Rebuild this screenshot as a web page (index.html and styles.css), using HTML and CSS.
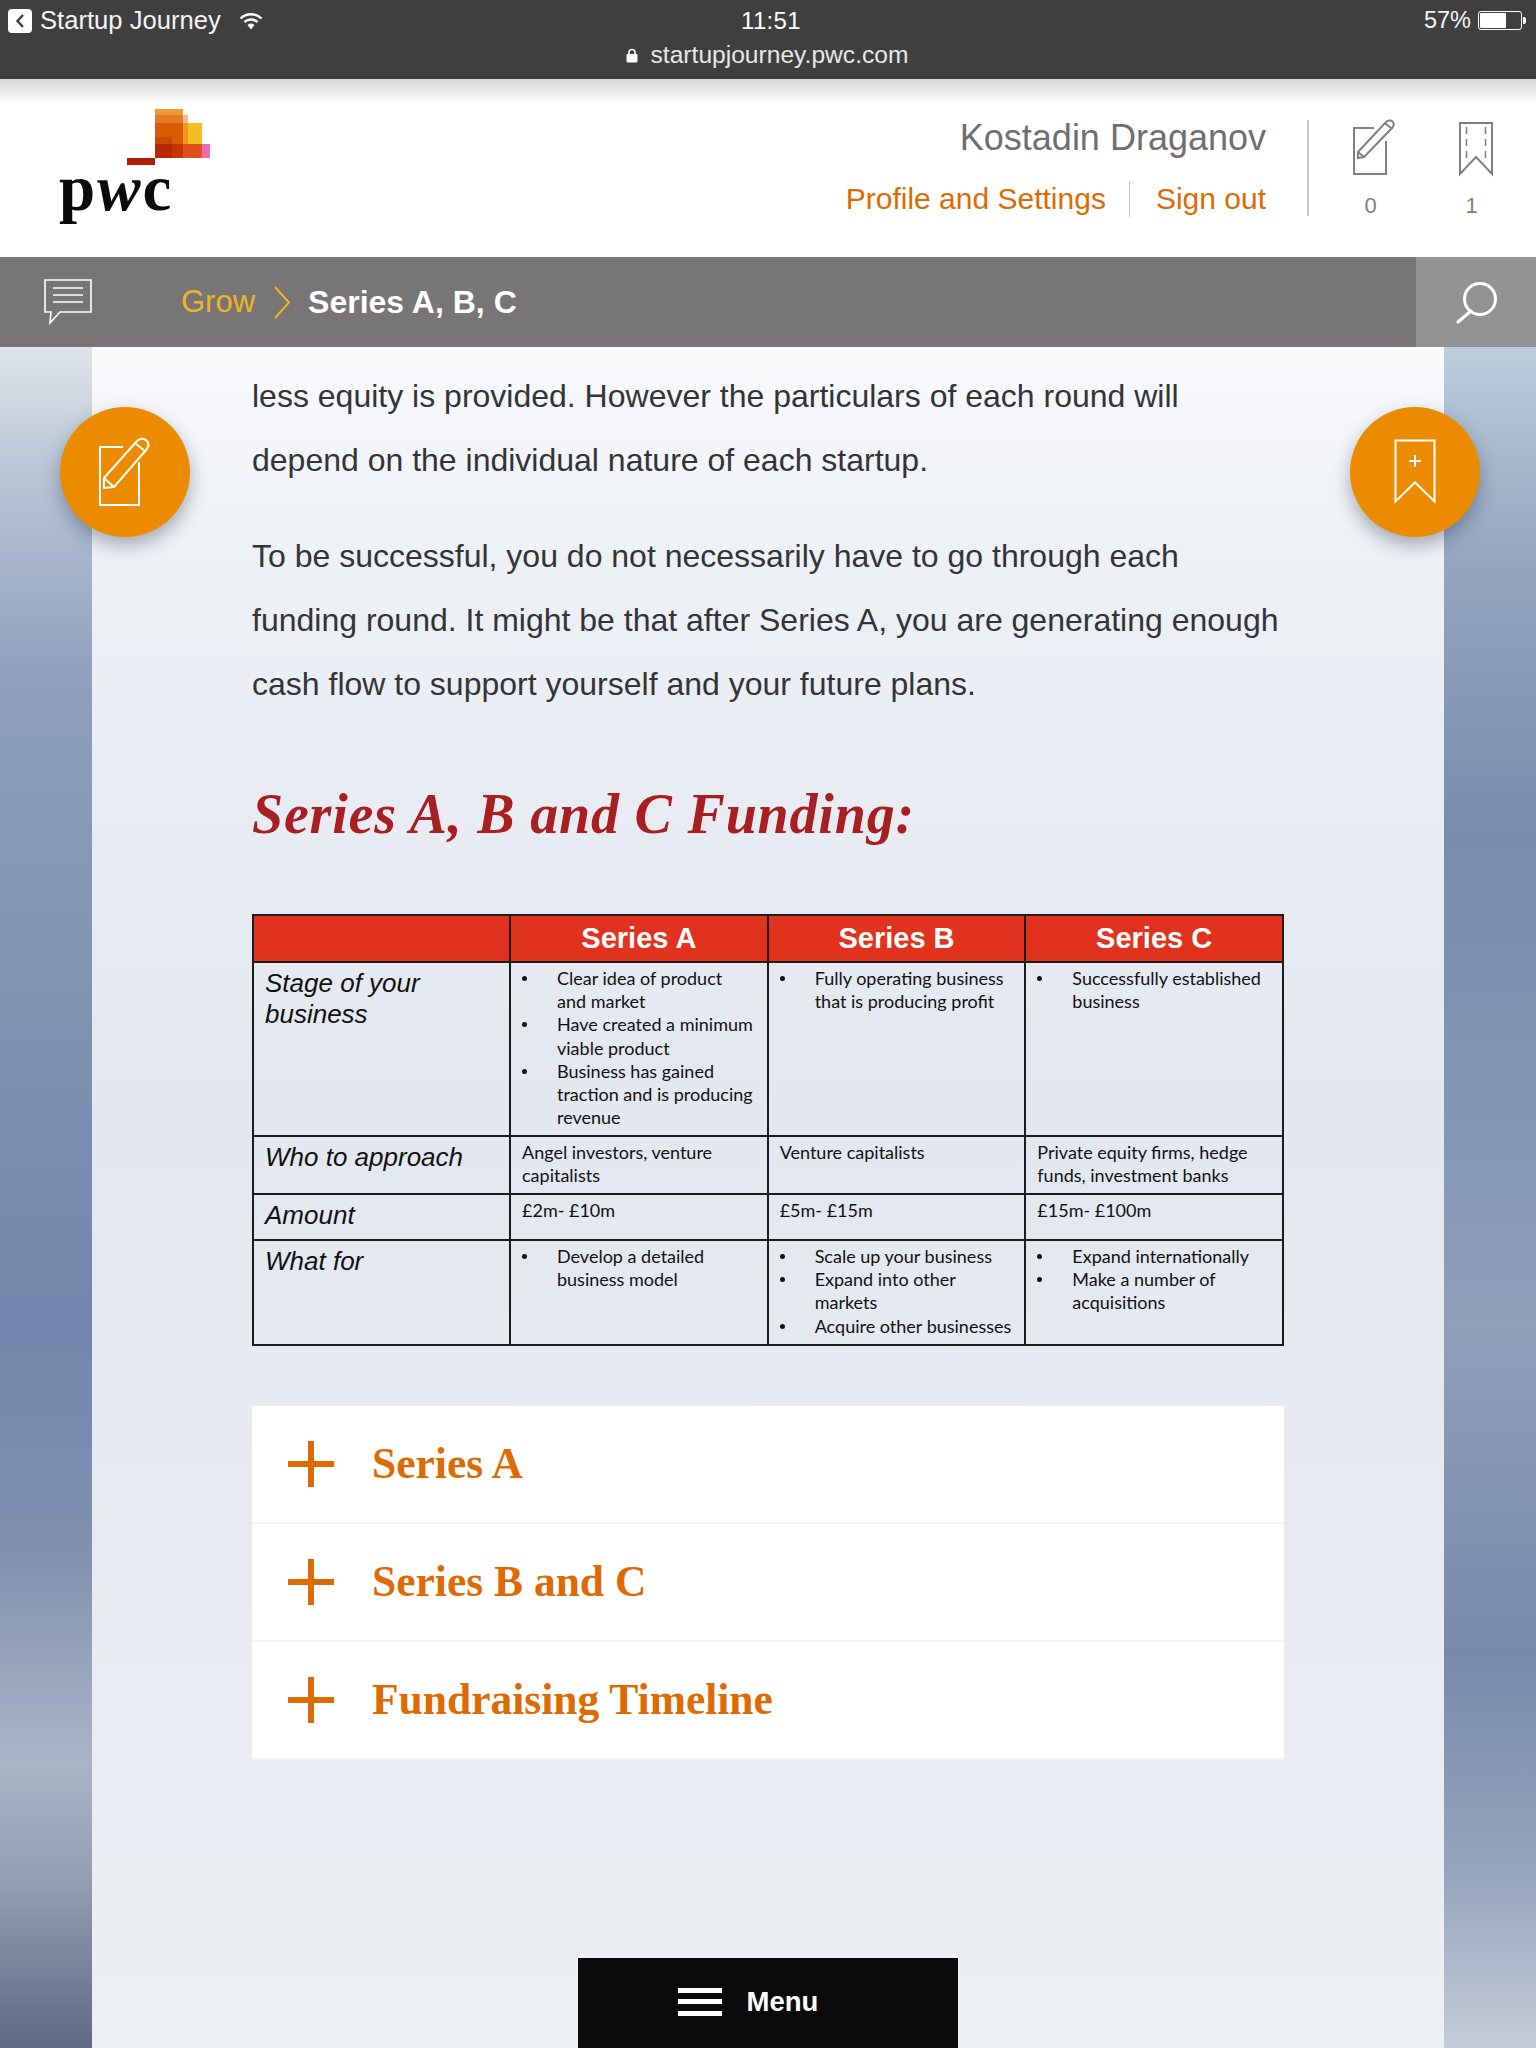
FILE: index.html
```html
<!DOCTYPE html>
<html lang="en">
<head>
    <meta charset="UTF-8">
    <meta name="viewport" content="width=device-width, initial-scale=1.0">
    <title>Series A, B, C</title>
    <link rel="stylesheet" href="styles.css">
</head>
<body>
    <div class="status-bar">
        <div class="status-row">
            <div class="status-left">
                <span class="back-badge">
                    <svg width="10" height="14" viewBox="0 0 10 14"><path d="M8 1 2.500 7 8 13" fill="none" stroke="#3f3f3f" stroke-width="2.400"/></svg>
                </span>
                <span>Startup Journey</span>
                <svg class="wifi" width="24" height="18" viewBox="0 0 24 18"><path d="M1.500 6.500a15 15 0 0 1 21 0M5.500 10a9.500 9.500 0 0 1 13 0" fill="none" stroke="#fff" stroke-width="2.400"/><path d="M8.500 13a5 5 0 0 1 7 0L12 17.500z" fill="#fff"/></svg>
            </div>
            <div class="status-time">11:51</div>
            <div class="status-right">
                <span>57%</span>
                <span class="battery"><span class="battery-level"></span></span>
                <span class="battery-tip"></span>
            </div>
        </div>
        <div class="url-row">
            <svg width="12" height="15" viewBox="0 0 12 15"><path d="M3 7V4.500a3 3 0 0 1 6 0V7" fill="none" stroke="#fff" stroke-width="1.600"/><rect x="0.500" y="6" width="11" height="8.500" rx="1" fill="#fff"/></svg>
            <span>startupjourney.pwc.com</span>
        </div>
    </div>

    <header class="site-header">
        <div class="logo">
            <svg class="logo-mark" width="151" height="56" viewBox="0 0 151 56">
                <rect x="96" y="0" width="28" height="6" fill="#ee9a38"/>
                <rect x="96" y="6" width="28" height="8" fill="#e67a24"/>
                <rect x="124" y="6" width="5" height="8" fill="#f2bd8d"/>
                <rect x="96" y="14" width="28" height="21" fill="#dc5a04"/>
                <rect x="124" y="14" width="19" height="21" fill="#f4bd22"/>
                <rect x="124" y="14" width="5" height="21" fill="#ec9a1c"/>
                <rect x="96" y="28" width="17" height="7" fill="#c9480a"/>
                <rect x="96" y="35" width="17" height="14" fill="#b52a02"/>
                <rect x="113" y="35" width="11" height="14" fill="#c73404"/>
                <rect x="124" y="35" width="19" height="14" fill="#e0501c"/>
                <rect x="143" y="35" width="8" height="14" fill="#ee6ab0"/>
                <rect x="68" y="49" width="28" height="7" fill="#b31b02"/>
            </svg>
            <div class="logo-text">p<i>w</i>c</div>
        </div>
        <div class="account">
            <div class="account-name">Kostadin Draganov</div>
            <div class="account-links">
                <a class="link-profile">Profile and Settings</a>
                <a class="link-signout">Sign out</a>
            </div>
        </div>
        <div class="counters">
            <div class="counter counter-notes">
                <svg width="44" height="58" viewBox="0 0 44 58" fill="none" stroke="#808080" stroke-width="2">
                    <path d="M21 9H1v46h32V22"/>
                    <path d="M5 33 33 3c2-2 5-2 6.500-.5s1.500 4 0 6L11 38l-6 1z"/>
                    <path d="M5 33l6 5M32 4l7 6"/>
                </svg>
                <span>0</span>
            </div>
            <div class="counter counter-saved">
                <svg width="36" height="58" viewBox="0 0 36 58" fill="none" stroke="#808080" stroke-width="2">
                    <path d="M2 4h32v51L18 38 2 55z"/>
                    <path d="M8.500 8v34M27.500 8v34" stroke-width="1.500" stroke-dasharray="7 5"/>
                </svg>
                <span>1</span>
            </div>
        </div>
    </header>

    <nav class="crumbs">
        <div class="crumbs-main">
            <svg class="chat-icon" width="50" height="48" viewBox="0 0 50 48" fill="none" stroke="#fff" stroke-width="1.600">
                <path d="M2 2h46v32H17l-10 11 1-11H2z"/>
                <path d="M10 10h30M10 17h30M10 24h30"/>
            </svg>
            <span class="crumb-parent">Grow</span>
            <svg width="18" height="33" viewBox="0 0 18 33" fill="none" stroke="#f0b323" stroke-width="2"><path d="M2 1l14 15.500L2 32"/></svg>
            <span class="crumb-current">Series A, B, C</span>
        </div>
        <div class="search-box">
            <svg width="44" height="44" viewBox="0 0 44 44" fill="none" stroke="#fff" stroke-width="3">
                <circle cx="26" cy="19" r="15.500"/>
                <path d="M17 31 4 42" stroke-linecap="round"/>
            </svg>
        </div>
    </nav>

    <div class="page-bg">
        <main class="card">
            <p class="para">less equity is provided. However the particulars of each round will<br>depend on the individual nature of each startup.</p>
            <p class="para para-next">To be successful, you do not necessarily have to go through each<br>funding round. It might be that after Series A, you are generating enough<br>cash flow to support yourself and your future plans.</p>

            <h2 class="funding-title">Series A, B and C Funding:</h2>

            <table class="funding-table">
                <thead>
                    <tr>
                        <th class="col-label"></th>
                        <th>Series A</th>
                        <th>Series B</th>
                        <th>Series C</th>
                    </tr>
                </thead>
                <tbody>
                    <tr class="row-stage">
                        <td class="row-label">Stage of your business</td>
                        <td><ul>
                            <li>Clear idea of product<br>and market</li>
                            <li>Have created a minimum viable product</li>
                            <li>Business has gained traction and is producing revenue</li>
                        </ul></td>
                        <td><ul><li>Fully operating business that is producing profit</li></ul></td>
                        <td><ul><li>Successfully established business</li></ul></td>
                    </tr>
                    <tr class="row-who">
                        <td class="row-label">Who to approach</td>
                        <td>Angel investors, venture capitalists</td>
                        <td>Venture capitalists</td>
                        <td>Private equity firms, hedge funds, investment banks</td>
                    </tr>
                    <tr class="row-amount">
                        <td class="row-label">Amount</td>
                        <td>£2m- £10m</td>
                        <td>£5m- £15m</td>
                        <td>£15m- £100m</td>
                    </tr>
                    <tr class="row-what">
                        <td class="row-label">What for</td>
                        <td><ul><li>Develop a detailed business model</li></ul></td>
                        <td><ul>
                            <li>Scale up your business</li>
                            <li>Expand into other markets</li>
                            <li>Acquire other businesses</li>
                        </ul></td>
                        <td><ul>
                            <li>Expand internationally</li>
                            <li>Make a number of acquisitions</li>
                        </ul></td>
                    </tr>
                </tbody>
            </table>

            <div class="accordion">
                <div class="accordion-item"><span class="plus"></span><span class="accordion-label">Series A</span></div>
                <div class="accordion-item"><span class="plus"></span><span class="accordion-label">Series B and C</span></div>
                <div class="accordion-item"><span class="plus"></span><span class="accordion-label">Fundraising Timeline</span></div>
            </div>
        </main>

        <button class="fab fab-note">
            <svg width="54" height="72" viewBox="0 0 54 72" fill="none" stroke="#fff" stroke-width="2">
                <path d="M25 11H2v58h39V26"/>
                <path d="M6 42 39 5c3-3 7-3 9.500-.5s2.500 6 0 9L16 51l-10 1z"/>
                <path d="M6 42l10 9M37 7l11 9"/>
            </svg>
        </button>
        <button class="fab fab-save">
            <svg width="42" height="66" viewBox="0 0 42 66" fill="none" stroke="#fff" stroke-width="2">
                <path d="M1.500 1.500h39v61L21 43.500 1.500 62.500z"/>
                <path d="M21 16v12M15 22h12"/>
            </svg>
        </button>

        <div class="menu-bar">
            <span class="burger"><span></span><span></span><span></span></span>
            <span>Menu</span>
        </div>
    </div>
</body>
</html>
```

FILE: styles.css
```css
* {
    box-sizing: border-box;
}
html, body {
    margin: 0;
    height: 2048px;
    overflow: hidden;
}
body {
    font-family: "Liberation Sans", Arial, sans-serif;
    background-color: #fff;
    display: flex;
    flex-direction: column;
}

/* ios status bar */
.status-bar {
    height: 79px;
    background-color: #3f3f3f;
    color: #fff;
    flex-shrink: 0;
    padding: 6px 10px 0 8px;
}
.status-row {
    display: grid;
    grid-template-columns: 1fr auto 1fr;
    align-items: center;
    height: 28px;
    font-size: 24px;
}
.status-left {
    display: flex;
    align-items: center;
    font-size: 25.600px;
    color: #f4f4f4;
}
.back-badge {
    width: 24px;
    height: 24px;
    background-color: #fff;
    border-radius: 4px;
    display: flex;
    align-items: center;
    justify-content: center;
    margin-right: 8px;
}
.wifi {
    margin-left: 18px;
}
.status-time {
    font-size: 24px;
    letter-spacing: 0.3px;
    margin-left: 8px;
}
.status-right {
    display: flex;
    align-items: center;
    justify-content: flex-end;
    font-size: 23.500px;
    color: #f4f4f4;
}
.battery {
    width: 44px;
    height: 19px;
    border: 1px solid #fff;
    border-radius: 3px;
    margin-left: 7px;
    padding: 1px;
}
.battery-level {
    display: block;
    width: 26px;
    height: 100%;
    background-color: #fff;
    border-radius: 1px;
}
.battery-tip {
    width: 3px;
    height: 7px;
    background-color: #fff;
    margin-left: 1px;
    border-radius: 0 2px 2px 0;
}
.url-row {
    display: flex;
    align-items: center;
    justify-content: center;
    gap: 13px;
    height: 30px;
    margin-top: 6px;
    font-size: 24.600px;
    color: #e8e8e8;
}

/* white header */
.site-header {
    height: 178px;
    flex-shrink: 0;
    background: linear-gradient(#d6d6d6 0, #f4f4f4 18px, #fff 25px);
    display: flex;
}
.logo {
    width: 230px;
    padding: 30px 0 0 59px;
}
.logo-mark {
    display: block;
}
.logo-text {
    font-family: "Liberation Serif", serif;
    font-weight: bold;
    font-size: 65px;
    line-height: 60px;
    color: #0a0a0a;
    margin-top: -7px;
    letter-spacing: 2px;
}
.account {
    margin-left: auto;
    padding-top: 39px;
}
.account-name {
    font-size: 36px;
    line-height: 40px;
    color: #6f6f72;
    text-align: right;
}
.account-links {
    display: flex;
    margin-top: 23px;
    font-size: 30px;
    line-height: 36px;
    color: #de6a04;
}
.link-profile {
    padding-right: 23px;
    border-right: 1px solid #c8c8c8;
}
.link-signout {
    padding-left: 26px;
}
.counters {
    display: flex;
    margin-left: 41px;
    margin-top: 41px;
    height: 96px;
    width: 229px;
    border-left: 2px solid #c8c8c8;
    padding-left: 11px;
}
.counter {
    width: 101px;
    display: flex;
    flex-direction: column;
    align-items: center;
    font-size: 22px;
    color: #808080;
    margin-top: -1px;
}
.counter svg {
    flex-shrink: 0;
}
.counter span {
    margin-top: 16px;
}
.counter-notes svg {
    margin-left: 9px;
}
.counter-saved svg {
    margin-left: 8px;
}

/* breadcrumb bar */
.crumbs {
    height: 90px;
    flex-shrink: 0;
    background-color: #777576;
    display: flex;
    align-items: center;
}
.crumbs-main {
    flex: 1;
    display: flex;
    align-items: center;
    padding-left: 43px;
}
.chat-icon {
    margin-right: 88px;
}
.crumb-parent {
    font-size: 31px;
    color: #f0b323;
    margin-right: 18px;
}
.crumb-current {
    font-size: 32px;
    font-weight: bold;
    color: #fff;
    margin-left: 17px;
}
.search-box {
    width: 120px;
    height: 100%;
    background-color: #939396;
    display: flex;
    align-items: center;
    justify-content: center;
}

/* page body */
.page-bg {
    flex: 1;
    position: relative;
    overflow: hidden;
    background-image:
        linear-gradient(#dfe4ea 0, #bdc9d8 110px, #8e9fbf 330px, #8497b5 545px, #7286ad 980px, #7f90b0 1200px, #a9b4c7 1415px, #96a0b5 1525px, #5e6a87 1701px),
        linear-gradient(#bccddd 0, #93a5c0 218px, #778cae 490px, #8296b5 760px, #8f9fbc 980px, #778aac 1307px, #95a5bf 1525px, #c4ccd8 1701px);
    background-size: 50% 100%;
    background-position: left top, right top;
    background-repeat: no-repeat;
}
.card {
    width: 1352px;
    height: 100%;
    margin: 0 auto;
    padding: 17px 160px 0 160px;
    background: linear-gradient(#f8fafc 0, #edf0f5 218px, #e3e7ef 760px, #e8ebf1 1300px, #eceff4 1701px);
}
.para {
    margin: 0;
    font-size: 32px;
    line-height: 64px;
    color: #333436;
    white-space: nowrap;
}
.para-next {
    margin-top: 32px;
}
.funding-title {
    font-family: "Liberation Serif", serif;
    font-style: italic;
    font-weight: bold;
    font-size: 56px;
    letter-spacing: 0.8px;
    line-height: 64px;
    color: #a81f22;
    margin: 66px 0 0 0;
}

/* funding table */
.funding-table {
    border-collapse: collapse;
    table-layout: fixed;
    width: 1032px;
    margin-top: 68px;
    font-family: Lato, sans-serif;
    font-size: 18px;
    line-height: 23.200px;
    color: #111;
}
.funding-table th {
    background-color: #e1321e;
    color: #fff;
    font-family: "Liberation Sans", Arial, sans-serif;
    font-size: 29px;
    height: 47px;
    padding: 0;
    border: 2px solid #1c1c1c;
}
.funding-table th.col-label {
    width: 257px;
}
.funding-table td {
    border: 2px solid #1c1c1c;
    vertical-align: top;
    padding: 4px 8px 0 11px;
}
.funding-table ul {
    margin: 0;
    padding: 0 0 0 35px;
    list-style: none;
}
.funding-table li {
    position: relative;
}
.funding-table li::before {
    content: "";
    position: absolute;
    left: -35px;
    top: 9px;
    width: 5px;
    height: 5px;
    border-radius: 50%;
    background-color: #111;
}
.funding-table .row-label {
    font-family: "Liberation Sans", Arial, sans-serif;
    font-style: italic;
    font-size: 26px;
    line-height: 31px;
    padding: 5px 11px 0 11px;
}
.row-stage td { height: 174px; }
.row-who td { height: 58px; }
.row-amount td { height: 46px; }
.row-what td { height: 105px; }

/* accordion */
.accordion {
    width: 1032px;
    margin-top: 60px;
    background-color: #fff;
}
.accordion-item {
    height: 118px;
    display: flex;
    align-items: center;
    gap: 38px;
    padding-left: 36px;
    border-bottom: 2px solid #f3f4f7;
    font-family: "Liberation Serif", serif;
    font-weight: bold;
    font-size: 43.500px;
    color: #de6a04;
}
.accordion-label {
    margin-top: -3px;
}
.plus {
    position: relative;
    width: 46px;
    height: 46px;
    flex-shrink: 0;
}
.plus::before, .plus::after {
    content: "";
    position: absolute;
    background-color: #de6a04;
}
.plus::before {
    left: 0;
    top: 20px;
    width: 46px;
    height: 6px;
}
.plus::after {
    left: 20px;
    top: 0;
    width: 6px;
    height: 46px;
}

/* floating buttons */
.fab {
    position: absolute;
    top: 60px;
    width: 130px;
    height: 130px;
    border: none;
    border-radius: 50%;
    padding: 0;
    background-color: #ec8b00;
    box-shadow: 0 8px 18px rgba(40, 50, 70, 0.38);
    display: flex;
    align-items: center;
    justify-content: center;
}
.fab-note { left: 60px; }
.fab-save { left: 1350px; }

.menu-bar {
    position: absolute;
    left: 578px;
    bottom: 0;
    width: 380px;
    height: 90px;
    padding: 0 40px 3px 0;
    background-color: #0b0b0b;
    color: #fff;
    font-size: 27.500px;
    font-weight: bold;
    display: flex;
    align-items: center;
    justify-content: center;
    gap: 25px;
}
.burger {
    display: flex;
    flex-direction: column;
    gap: 6.500px;
    width: 44px;
}
.burger span {
    display: block;
    height: 5px;
    background-color: #fff;
}
```
